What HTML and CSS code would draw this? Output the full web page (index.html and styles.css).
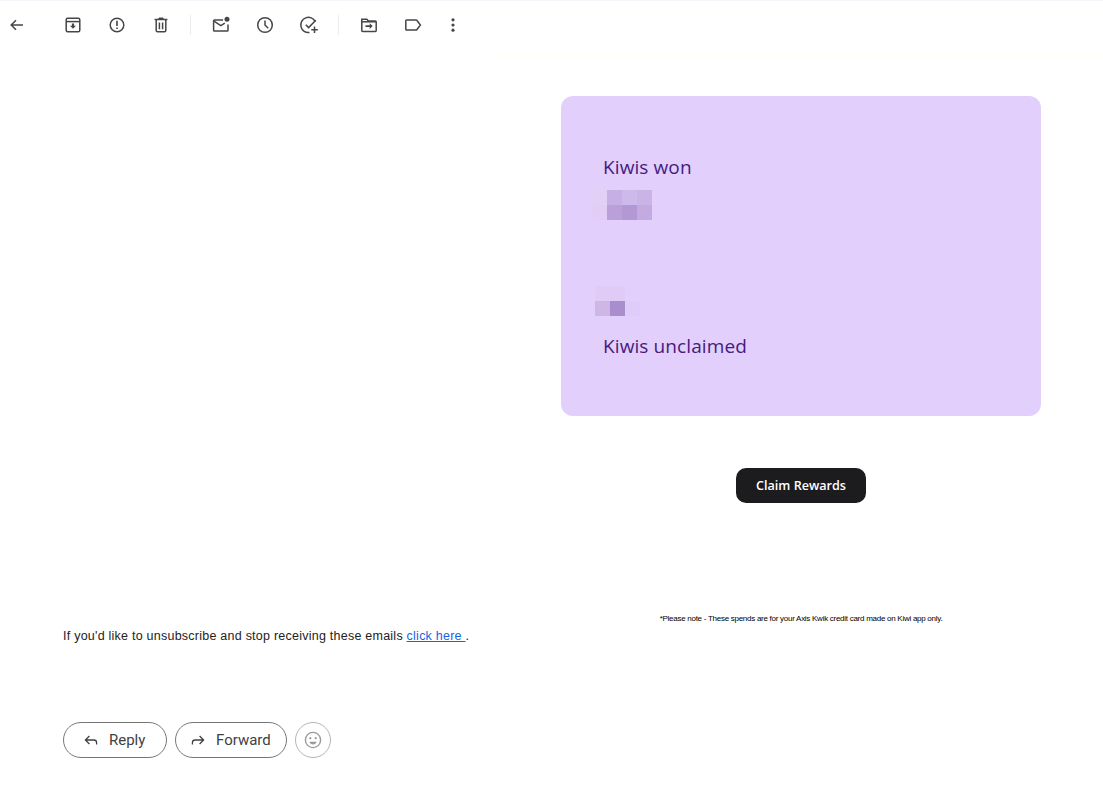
FILE: index.html
```html
<!DOCTYPE html>
<html lang="en">
<head>
    <meta charset="UTF-8">
    <title>Kiwi rewards - Mail</title>
    <link rel="stylesheet" href="styles.css">
</head>
<body>
    <!-- toolbar -->
    <div class="toolbar">
        <button class="tool tool-back" title="Back">
            <svg viewBox="0 0 20 20"><path d="M16 10H4.500M9 5.200 4.200 10 9 14.800"/></svg>
        </button>
        <button class="tool" title="Archive">
            <svg viewBox="0 0 20 20"><rect x="3.200" y="3.200" width="13.600" height="13.600" rx="1.500"/><path d="M3.200 6.600h13.600"/><path class="fill" d="M8.900 8.400h2.200v2.400H13l-3 3-3-3h1.900z"/></svg>
        </button>
        <button class="tool" title="Report spam">
            <svg viewBox="0 0 20 20"><circle cx="10" cy="10" r="6.800"/><path class="fill" d="M9.200 5.800h1.600v5.200H9.200zM9.200 12.400h1.600V14H9.200z"/></svg>
        </button>
        <button class="tool" title="Delete">
            <svg viewBox="0 0 20 20"><path d="M5.200 5.200v10.200c0 .8.600 1.400 1.400 1.400h6.800c.8 0 1.400-.6 1.400-1.400V5.200M3.600 4.600h12.800M7.600 4.400l.8-1.200h3.200l.8 1.200M8.400 7.600v6.600M11.600 7.600v6.600"/></svg>
        </button>
        <span class="divider"></span>
        <button class="tool" title="Mark as unread">
            <svg viewBox="0 0 20 20"><path d="M12 5H3.400c-.5 0-.8.400-.8.800v9.400c0 .5.400.8.800.8h12.800c.5 0 .8-.4.8-.8V9.400"/><path d="m3 6.200 6.800 4.400 4-2.500"/><circle class="fill" cx="16" cy="4.200" r="2.500"/></svg>
        </button>
        <button class="tool" title="Snooze">
            <svg viewBox="0 0 20 20"><circle cx="10" cy="10" r="7.300"/><path d="M10 5.600V10l3.200 3.200"/></svg>
        </button>
        <button class="tool" title="Add to tasks">
            <svg viewBox="0 0 20 20"><path d="M16.200 6.600A7.600 7.600 0 1 0 10.500 17.500"/><path d="m6.800 9.800 2.800 2.800 7.200-7.400M15.500 11.500v6.500M12.300 14.800h6.500"/></svg>
        </button>
        <span class="divider"></span>
        <button class="tool" title="Move to">
            <svg viewBox="0 0 20 20"><path d="M2.800 5.800V4.200h5l1.600 1.800h7c.5 0 .8.400.8.800v8.800c0 .5-.4.800-.8.800H3.600c-.5 0-.8-.4-.8-.8z"/><path d="M2.800 6.800h14"/><path class="fill" d="M6.500 10.300h4.200V8.300l3 2.800-3 2.800v-2H6.500z"/></svg>
        </button>
        <button class="tool" title="Labels">
            <svg viewBox="0 0 20 20"><path d="M3.600 5h9.500c.4 0 .7.200.9.500l3.400 4.500-3.400 4.500c-.2.300-.5.500-.9.500H3.600c-.5 0-.8-.4-.8-.8V5.800c0-.4.300-.8.800-.8z"/></svg>
        </button>
        <button class="tool tool-more" title="More">
            <svg viewBox="0 0 20 20"><circle class="fill" cx="10" cy="4.800" r="1.600"/><circle class="fill" cx="10" cy="10" r="1.600"/><circle class="fill" cx="10" cy="15.200" r="1.600"/></svg>
        </button>
    </div>
    <div class="strip"></div>

    <!-- mail body -->
    <div class="mail">
        <div class="mail-left">
            <p class="unsub">If you'd like to unsubscribe and stop receiving these emails <a href="#">click here </a>.</p>
        </div>
        <div class="mail-right">
            <div class="card">
                <div class="kiwi-label kiwi-won">Kiwis won</div>
                <div class="mosaic mosaic-won">
                    <span class="c1"></span><span class="c2"></span><span class="c3"></span><span class="c4"></span>
                    <span class="c5"></span><span class="c6"></span><span class="c7"></span><span class="c8"></span>
                </div>
                <div class="mosaic mosaic-unclaimed">
                    <span class="c9"></span><span class="c9"></span><span class="c0"></span>
                    <span class="c10"></span><span class="c11"></span><span class="c12"></span>
                </div>
                <div class="kiwi-label kiwi-unclaimed">Kiwis unclaimed</div>
            </div>
            <div class="claim-row"><a class="claim" href="#">Claim Rewards</a></div>
            <p class="note">*Please note - These spends are for your Axis Kwik credit card made on Kiwi app only.</p>
        </div>
    </div>

    <!-- reply buttons -->
    <div class="actions">
        <button class="pill pill-reply">
            <svg viewBox="0 0 20 20"><path d="M17 15.500v-2c0-2-1.400-3.500-3.500-3.500H3.500M8 5 3 10l5 5"/></svg>
            Reply
        </button>
        <button class="pill pill-forward">
            <svg viewBox="0 0 20 20"><path d="M3 15.500v-2c0-2 1.400-3.500 3.500-3.500h10M12 5l5 5-5 5"/></svg>
            Forward
        </button>
        <button class="emoji" title="React">
            <svg viewBox="0 0 20 20"><circle cx="10" cy="10" r="7.600"/><circle class="fill" cx="7.300" cy="8.200" r="1.100"/><circle class="fill" cx="12.700" cy="8.200" r="1.100"/><path class="fill" d="M6.400 11.800h7.200c-.5 1.700-1.900 2.700-3.600 2.700s-3.100-1-3.600-2.700z"/></svg>
        </button>
    </div>
</body>
</html>
```

FILE: styles.css
```css
html, body {
    height: 100%;
}
body {
    margin: 0;
    background-color: #fff;
    color: #222;
    font-family: "Liberation Sans", Arial, sans-serif;
    overflow: hidden;
}
button {
    background: none;
    font-family: inherit;
    cursor: pointer;
}
svg {
    display: block;
    fill: none;
    stroke: currentColor;
}
svg .fill {
    fill: currentColor;
    stroke: none;
}

/* toolbar */
.toolbar {
    display: flex;
    align-items: center;
    height: 47px;
    padding-bottom: 2px;
    border-top: 1px solid #f5f6fb;
    color: #444746;
}
.tool {
    display: flex;
    align-items: center;
    justify-content: center;
    width: 44px;
    height: 40px;
    padding: 0;
    border: none;
    color: inherit;
}
.tool svg {
    width: 20px;
    height: 20px;
    stroke-width: 1.500;
}
.tool-back {
    width: 34px;
    margin-right: 17px;
}
.tool-more {
    width: 36px;
}
.divider {
    width: 1px;
    height: 20px;
    margin: 0 8px 0 7px;
    background-color: #eceded;
}
.strip {
    height: 10px;
    margin-left: 497px;
    background-color: #fffffb;
}

/* mail body */
.mail {
    display: flex;
    align-items: flex-end;
}
.mail-left {
    flex: 1;
    padding-left: 63px;
}
.unsub {
    margin: 0 0 1px;
    font-size: 12.500px;
    line-height: 16px;
    letter-spacing: 0.240px;
}
.unsub a {
    color: #1a63e0;
}
.mail-right {
    width: 480px;
    margin-right: 62px;
    padding-top: 36px;
}
.card {
    box-sizing: border-box;
    height: 320px;
    padding-top: 58px;
    background-color: #e2cffc;
    border-radius: 12px;
    color: #471a80;
    font-family: "Open Sans", "Liberation Sans", sans-serif;
}
.kiwi-label {
    margin-left: 42px;
    font-size: 19px;
    font-weight: 500;
    line-height: 26px;
    letter-spacing: 0.100px;
}
.mosaic {
    display: grid;
    grid-template-columns: repeat(auto-fill, 15px);
    grid-auto-rows: 15px;
}
.mosaic-won {
    width: 60px;
    margin: 10px 0 0 31px;
}
.mosaic-unclaimed {
    width: 45px;
    margin: 66px 0 0 34px;
}
.kiwi-unclaimed {
    margin-top: 17px;
}
.c1 { background-color: #e3d0f7; }
.c2 { background-color: #c6afe4; }
.c3 { background-color: #cdb9ea; }
.c4 { background-color: #cab4e7; }
.c5 { background-color: #e1cdf5; }
.c6 { background-color: #b9a0d9; }
.c7 { background-color: #b299d5; }
.c8 { background-color: #c3abe1; }
.c9 { background-color: #dfcbf6; }
.c10 { background-color: #ceb6e7; }
.c11 { background-color: #a98dcc; }
.c12 { background-color: #dfccf9; }
.claim-row {
    display: flex;
    justify-content: center;
    margin-top: 52px;
}
.claim {
    width: 130px;
    height: 35px;
    background-color: #1c1c1e;
    border-radius: 10px;
    color: #fff;
    font-family: "Open Sans", "Liberation Sans", sans-serif;
    font-size: 12.600px;
    font-weight: 600;
    line-height: 35px;
    text-align: center;
    text-decoration: none;
}
.note {
    margin: 111px 0 21px;
    color: #000;
    font-size: 8px;
    line-height: 10px;
    letter-spacing: -0.270px;
    text-align: center;
}

/* reply buttons */
.actions {
    display: flex;
    gap: 8px;
    margin: 77px 0 0 63px;
}
.pill {
    display: flex;
    align-items: center;
    box-sizing: border-box;
    height: 36px;
    padding: 0 0 0 19px;
    border: 1px solid #747775;
    border-radius: 18px;
    color: #3f4241;
    font-family: Roboto, "Liberation Sans", sans-serif;
    font-size: 15px;
    font-weight: 400;
}
.pill svg {
    width: 16px;
    height: 16px;
    margin-right: 10px;
    stroke-width: 1.600;
}
.pill-reply {
    width: 104px;
}
.pill-forward {
    width: 112px;
    padding-left: 14px;
}
.emoji {
    box-sizing: border-box;
    display: flex;
    align-items: center;
    justify-content: center;
    width: 36px;
    height: 36px;
    padding: 0;
    border: 1px solid #b4b6b5;
    border-radius: 50%;
    color: #999b9a;
}
.emoji svg {
    width: 20px;
    height: 20px;
    stroke-width: 1.400;
}
```
